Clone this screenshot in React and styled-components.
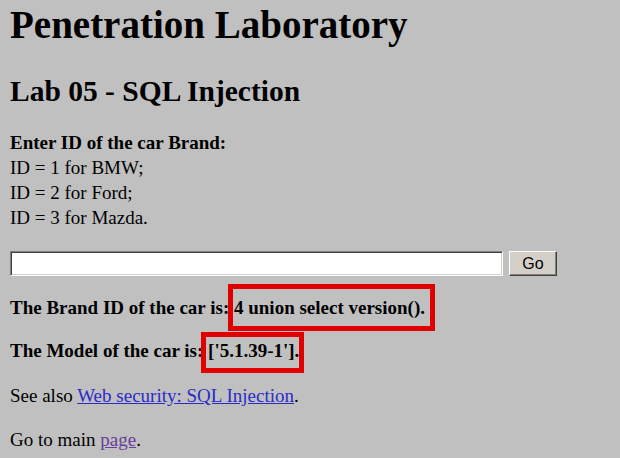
import styled, { createGlobalStyle } from "styled-components";

const GlobalStyle = createGlobalStyle`
  html, body {
    margin: 0;
    padding: 0;
    background: #c0c0c0;
  }
  body {
    font-family: "Liberation Serif", "Times New Roman", serif;
    color: #000;
  }
`;

const Page = styled.div`
  padding: 3px 10px 0 10px;
  width: 620px;
  height: 458px;
  box-sizing: border-box;
  overflow: hidden;
`;

const Title = styled.h1`
  font-size: 39px;
  line-height: 44px;
  font-weight: bold;
  margin: 0;
`;

const SubTitle = styled.h2`
  font-size: 29.5px;
  line-height: 32px;
  font-weight: bold;
  margin: 28px 0 0 0;
`;

const Text = styled.p`
  font-size: 19px;
  line-height: ${(props) => props.lh || 24}px;
  margin: ${(props) => props.top}px 0 0 0;
`;

const Form = styled.form`
  display: flex;
  gap: 6px;
  margin-top: 21px;
  height: 25px;
`;

const Field = styled.input`
  width: 493px;
  height: 25px;
  box-sizing: border-box;
  background: #fff;
  border: 1px solid;
  border-color: #808080 #ffffff #ffffff #808080;
  box-shadow: inset 1px 1px 0 #404040, inset -1px -1px 0 #d4d0c8;
  padding: 2px 4px;
  font-size: 16px;
  outline: none;
`;

const Button = styled.button`
  width: 48px;
  height: 25px;
  box-sizing: border-box;
  background: #d4d0c8;
  border: 1px solid;
  border-color: #ffffff #404040 #404040 #ffffff;
  box-shadow: inset -1px -1px 0 #808080;
  font-family: "Liberation Sans", Arial, sans-serif;
  font-size: 16px;
  color: #000;
  padding: 0;
`;

const Marked = styled.span`
  position: relative;
  &::after {
    content: "";
    position: absolute;
    left: ${(props) => props.l}px;
    right: ${(props) => props.r}px;
    top: ${(props) => props.t}px;
    bottom: ${(props) => props.b}px;
    border: 5px solid #e00000;
  }
`;

const Link = styled.a`
  color: ${(props) => (props.visited ? "#6a3d9a" : "#2b2bc8")};
  text-decoration: underline;
`;

export default function App() {
  return (
    <>
      <GlobalStyle />
      <Page>
        <Title>Penetration Laboratory</Title>
        <SubTitle>Lab 05 - SQL Injection</SubTitle>
        <Text top={23} lh={25}>
          <b>Enter ID of the car Brand:</b>
          <br />
          ID = 1 for BMW;
          <br />
          ID = 2 for Ford;
          <br />
          ID = 3 for Mazda.
        </Text>
        <Form onSubmit={(e) => e.preventDefault()}>
          <Field type="text" />
          <Button type="submit">Go</Button>
        </Form>
        <Text top={20}>
          <b>
            The Brand ID of the car is:{" "}
            <Marked l={-6} r={-10} t={-13} b={-13}>
              4 union select version().
            </Marked>
          </b>
        </Text>
        <Text top={19}>
          <b>
            The Model of the car is:{" "}
            <Marked l={-7} r={-9} t={-8} b={-12}>
              ['5.1.39-1']
            </Marked>
            .
          </b>
        </Text>
        <Text top={21}>
          See also <Link href="#">Web security: SQL Injection</Link>.
        </Text>
        <Text top={20}>
          Go to main <Link href="#" visited>page</Link>.
        </Text>
      </Page>
    </>
  );
}
